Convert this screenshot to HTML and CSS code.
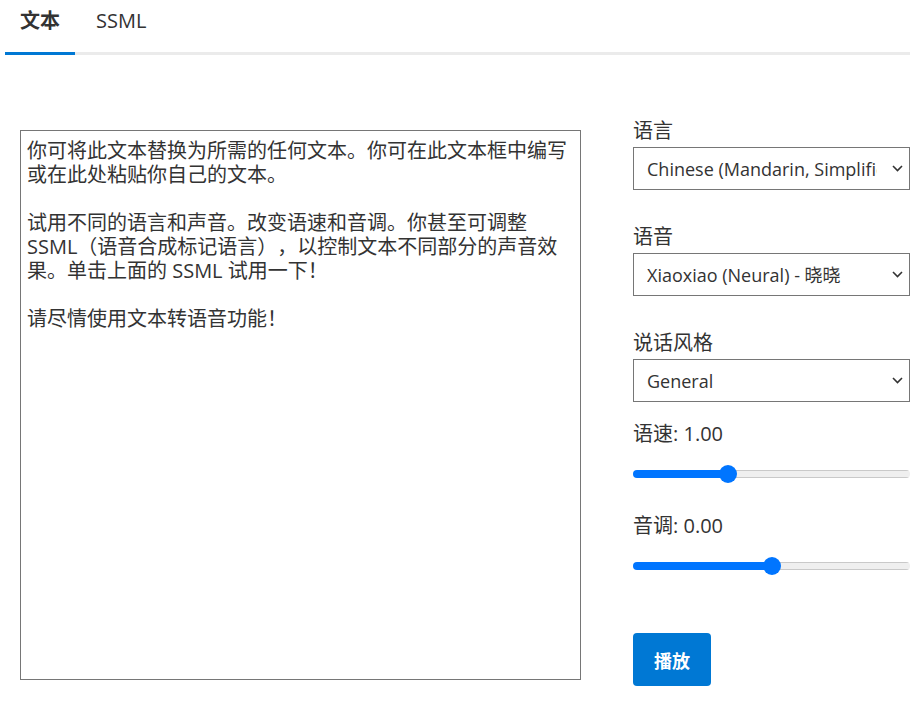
FILE: index.html
```html
<!DOCTYPE html>
<html lang="zh-CN">
  <head>
    <meta charset="UTF-8" />
    <meta name="viewport" content="width=device-width, initial-scale=1.0" />
    <title>文本转语音</title>
    <link rel="stylesheet" href="styles.css">
  </head>
  <body>
    <div class="tabs">
      <div class="tab active">文本</div>
      <div class="tab">SSML</div>
    </div>

    <div class="main">
      <div class="editor">
        <textarea id="inputText" spellcheck="false">你可将此文本替换为所需的任何文本。你可在此文本框中编写或在此处粘贴你自己的文本。

试用不同的语言和声音。改变语速和音调。你甚至可调整 SSML（语音合成标记语言），以控制文本不同部分的声音效果。单击上面的 SSML 试用一下！

请尽情使用文本转语音功能！</textarea>
      </div>

      <div class="controls">
        <div class="field">
          <label for="language">语言</label>
          <select id="language">
            <option>Chinese (Mandarin, Simplified)</option>
          </select>
        </div>

        <div class="field">
          <label for="voice">语音</label>
          <select id="voice">
            <option>Xiaoxiao (Neural) - 晓晓</option>
          </select>
        </div>

        <div class="field compact">
          <label for="style">说话风格</label>
          <select id="style">
            <option>General</option>
          </select>
        </div>

        <div class="field range">
          <label for="rate">语速: <span id="rateValue">1.00</span></label>
          <input type="range" id="rate" min="0" max="3" step="0.01" value="1" />
        </div>

        <div class="field range">
          <label for="pitch">音调: <span id="pitchValue">0.00</span></label>
          <input type="range" id="pitch" min="-1" max="1" step="0.01" value="0" />
        </div>

        <button class="play" id="playBtn">播放</button>
      </div>
    </div>

    <script>
      document.addEventListener("DOMContentLoaded", function () {
        function setupSlider(id, labelId) {
          const slider = document.getElementById(id);
          const label = document.getElementById(labelId);

          function update() {
            const min = parseFloat(slider.min);
            const max = parseFloat(slider.max);
            const ratio = (slider.value - min) / (max - min);
            // fill ends at the thumb centre (thumb is 18px wide)
            const px = 9 + ratio * (slider.offsetWidth - 18);
            slider.style.setProperty("--fill", px + "px");
            label.textContent = parseFloat(slider.value).toFixed(2);
          }

          slider.addEventListener("input", update);
          update();
        }

        setupSlider("rate", "rateValue");
        setupSlider("pitch", "pitchValue");
      });
    </script>
  </body>
</html>
```

FILE: styles.css
```css
* {
  margin: 0;
  padding: 0;
  box-sizing: border-box;
}

body {
  font-family: "Open Sans", "Noto Sans CJK SC", sans-serif;
  color: #333;
  background: white;
  text-spacing-trim: space-all;
}

.tabs {
  display: flex;
  gap: 6px;
  margin: 0 14px 0 5px;
  border-bottom: 3px solid #ebebeb;
}

.tab {
  font-size: 20px;
  line-height: 26px;
  padding: 8px 15px 18px;
  cursor: pointer;
}

.tab.active {
  font-weight: 700;
  border-bottom: 3px solid #0078d4;
  margin-bottom: -3px;
}

.main {
  display: grid;
  grid-template-columns: 561px 277px;
  justify-content: space-between;
  padding: 64px 14px 0 20px;
}

textarea {
  display: block;
  width: 561px;
  height: 550px;
  margin-top: 11px;
  padding: 8px 6px;
  border: 1px solid #767676;
  font-family: inherit;
  font-size: 20px;
  line-height: 24px;
  color: #333;
  resize: none;
  text-spacing-trim: space-all;
}

textarea:focus {
  outline: none;
}

.field {
  margin-bottom: 35px;
}

.field.compact {
  margin-bottom: 20px;
}

.field.range {
  margin-bottom: 36px;
}

label {
  display: block;
  font-size: 20px;
  line-height: 24px;
  margin-bottom: 4px;
}

select {
  display: block;
  width: 100%;
  height: 43px;
  padding: 0 32px 0 13px;
  border: 1px solid #767676;
  border-radius: 0;
  font-family: inherit;
  font-size: 18px;
  color: #333;
  appearance: none;
  -webkit-appearance: none;
  background: white url("data:image/svg+xml,%3Csvg xmlns='http://www.w3.org/2000/svg' width='11' height='7' viewBox='0 0 11 7'%3E%3Cpath d='M1 1l4.5 4.5L10 1' fill='none' stroke='%23333' stroke-width='1.6'/%3E%3C/svg%3E") no-repeat right 6px center;
}

input[type="range"] {
  display: block;
  width: 100%;
  height: 8px;
  margin-top: 24px;
  background: transparent;
  -webkit-appearance: none;
  appearance: none;
  --fill: 50%;
}

input[type="range"]:focus {
  outline: none;
}

input[type="range"]::-webkit-slider-runnable-track {
  height: 8px;
  border-radius: 4px;
  background:
    linear-gradient(#0075ff, #0075ff) 0 0 / var(--fill) 100% no-repeat,
    linear-gradient(#c9c9c9 1px, #efefef 1px, #efefef 7px, #c9c9c9 7px);
}

input[type="range"]::-webkit-slider-thumb {
  -webkit-appearance: none;
  width: 18px;
  height: 18px;
  margin-top: -5px;
  border-radius: 50%;
  background: #0075ff;
  border: none;
  cursor: pointer;
}

.play {
  margin-top: 27px;
  height: 53px;
  padding: 0 21px;
  background: #0078d4;
  color: white;
  border: none;
  border-radius: 4px;
  font-family: inherit;
  font-size: 18px;
  font-weight: 700;
  cursor: pointer;
}

.play:hover {
  background: #106ebe;
}
```
